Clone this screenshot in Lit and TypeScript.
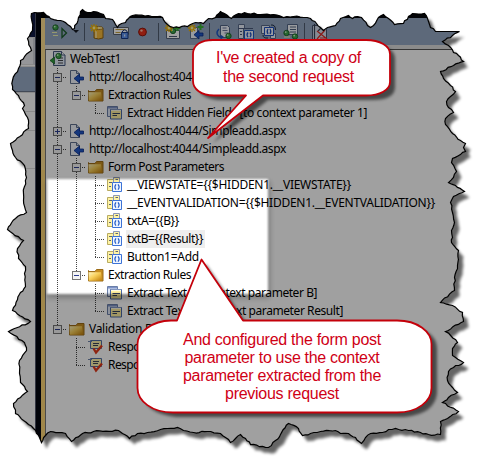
import { LitElement, html, css, svg } from "lit";
import { customElement } from "lit/decorators.js";

// Torn paper contour, clockwise from the top left corner.
const EDGE = `31,13 34,12 43,12 46,15 50,18 60,20 67,24 72,29 74,28 78,17 80,11 82,9 87,12 93,11 100,13 103,14 105,18 112,19 115,24 117,27 121,23 125,22 128,18 132,15 157,16 162,17 167,24 173,27 187,26 195,22 203,23 208,18 215,17 220,11 227,15 231,18 238,13 247,13 260,14 273,14 283,17 293,16 303,17 310,18 316,23 320,27 323,30 327,27 335,25 340,18 348,15 352,18 357,16 361,17 367,25 370,27 373,25 378,17 383,14 388,18 394,24 403,23 408,16 412,13 424,13 427,18 430,27 435,31 459,31 452,35 442,41 448,45 453,52 458,55 463,61 453,65 440,71 443,78 450,85 455,91 450,96 446,101 448,107 453,112 445,118 445,124 452,133 460,140 465,143 463,147 465,151 452,158 451,162 456,171 453,177 448,182 455,185 464,191 453,196 450,202 452,212 454,222 451,230 452,237 451,242 458,250 457,265 454,277 454,290 440,302 452,305 462,312 463,321 445,331 457,342 452,348 452,355 463,362 453,367 448,371 447,380 452,387 457,392 448,397 442,402 458,411 447,418 440,421 440,434 428,434 420,432 408,430 395,428 388,429 382,432 370,433 365,437 361,443 355,437 348,433 340,433 335,430 320,431 310,433 302,435 298,428 288,423 280,434 275,440 268,447 250,444 245,438 240,434 235,438 230,442 225,437 220,433 207,431 193,432 183,430 177,427 167,428 160,429 147,432 137,433 129,438 122,433 118,430 93,431 82,433 71,441 65,433 58,432 50,431 45,435 41,442 39,437 33,428 23,420 15,413 13,403 20,397 27,391 20,382 19,373 19,360 26,350 24,342 8,331 30,321 12,310 17,299 20,292 25,286 24,273 25,266 18,258 17,248 23,240 7,229 15,218 26,212 23,200 23,193 26,177 24,165 15,157 12,150 10,143 28,128 27,117 22,108 24,105 18,95 12,89 12,80 18,68 20,60 31,50 27,38 32,30`;

// Adds small deterministic notches between contour points.
function tear(edge: string): string {
  const p = edge.split(" ").map((s) => s.split(",").map(Number));
  const out: string[] = [];
  let seed = 7;
  p.forEach(([x, y], i) => {
    const [nx, ny] = p[(i + 1) % p.length];
    const d = Math.hypot(nx - x, ny - y);
    const n = d > 23.5 && (ny === y || nx === x) ? 1 : Math.max(1, Math.round(d / 3));
    for (let k = 0; k < n; k++) {
      seed = (seed * 16807) % 2147483647;
      const j = k ? ((seed % 100) / 100 - 0.5) * 1.7 : 0;
      const ux = (nx - x) / d, uy = (ny - y) / d;
      out.push(`${(x + ux * d * k / n - uy * j + 0.5).toFixed(1)} ${(y + uy * d * k / n + ux * j + 0.5).toFixed(1)}`);
    }
  });
  return "M" + out.join("L") + "Z";
}
const TORN = tear(EDGE);

interface Row { g: string[]; icon: string; text: string; w?: number; sel?: boolean }
// Guide cells: v line, t tee, l elbow, _ blank; a + or - adds an expander box.
const ROWS: Row[] = [
  { g: [], icon: "test", text: "WebTest1", w: 51 },
  { g: ["t-"], icon: "request", text: "http://localhost:4044/Simpleadd.aspx", w: 197 },
  { g: ["v", "l-"], icon: "folder", text: "Extraction Rules", w: 83 },
  { g: ["v", "_", "l"], icon: "extract", text: "Extract Hidden Fields [to context parameter 1]", w: 240 },
  { g: ["t+"], icon: "request", text: "http://localhost:4044/Simpleadd.aspx", w: 197 },
  { g: ["t-"], icon: "request", text: "http://localhost:4044/Simpleadd.aspx", w: 197 },
  { g: ["v", "t-"], icon: "folder", text: "Form Post Parameters", w: 116 },
  { g: ["v", "v", "t"], icon: "param", text: "__VIEWSTATE={{$HIDDEN1.__VIEWSTATE}}", w: 224 },
  { g: ["v", "v", "t"], icon: "param", text: "__EVENTVALIDATION={{$HIDDEN1.__EVENTVALIDATION}}", w: 308 },
  { g: ["v", "v", "t"], icon: "param", text: "txtA={{B}}", w: 52 },
  { g: ["v", "v", "t"], icon: "param", text: "txtB={{Result}}", w: 76, sel: true },
  { g: ["v", "v", "l"], icon: "param", text: "Button1=Add", w: 72 },
  { g: ["v", "l-"], icon: "folder", text: "Extraction Rules", w: 83 },
  { g: ["v", "_", "t"], icon: "extract", text: "Extract Text [to context parameter B]", w: 190 },
  { g: ["v", "_", "l"], icon: "extract", text: "Extract Text [to context parameter Result]", w: 216 },
  { g: ["l-"], icon: "folder", text: "Validation Rules", w: 85 },
  { g: ["_", "t"], icon: "validate", text: "Response URL", w: 74 },
  { g: ["_", "l"], icon: "validate", text: "Response Time", w: 78 },
];

const star = svg`<path d="M4 0v8M0 4h8M1 1l6 6M7 1l-6 6" stroke="#f0b400" stroke-width="1.3"/><circle cx="4" cy="4" r="1.4" fill="#fff3a0"/>`;
const globe = (x: number, y: number) => svg`<circle cx=${x} cy=${y} r="2.700" fill="#3fa34c" stroke="#145c22" stroke-width=".8"/><circle cx=${x - 0.8} cy=${y - 0.9} r=".9" fill="#c9f5c4"/>`;

const ICONS: Record<string, unknown> = {
  test: svg`<path d="M3.500.5h8l3.500 3.500v10.500H3.500z" fill="#e4edfb" stroke="#46597e"/><path d="M11.500.5V4H15" fill="#fff" stroke="#46597e"/><path d="M8 7h5M8 9.500h5M8 12h5" stroke="#45464a"/>${globe(8.5, 5)}<path d="M0 9.500 4.500 6v7z" fill="#2d9c3b" stroke="#145c22" stroke-width=".7"/>`,
  request: svg`<path d="M1.500 1.500h6l3 3v10h-9z" fill="#f2f5fc" stroke="#60708f"/><path d="M7.500 1.500v3h3" fill="#ccd8ee" stroke="#60708f"/><path d="M14.500 8h-4V5L5 9.500 10.500 14v-3h4z" fill="#2058c8" stroke="#0c2f8c" stroke-width=".8"/>`,
  folder: svg`<defs><linearGradient id="f" x2="1" y2="1"><stop stop-color="#fff8c8"/><stop offset=".45" stop-color="#f8cf5a"/><stop offset="1" stop-color="#bf7c08"/></linearGradient></defs><path d="M.5 3.500v10.500h14.500V2.500H8.500L7 4.500H1z" fill="#c88f22" stroke="#9c6c18"/><path d="M.5 5.200h12.500l1 8.600H.8z" fill="url(#f)"/>`,
  extract: svg`<path d="M.5 1.500h10v10h-10z" fill="#dfe8f8" stroke="#6a7fa8"/><path d="M1 2.700h9" stroke="#7e93c8" stroke-width="1.500"/><path d="M3.500 4.500h11v9.500H3.500z" fill="#fff0a0" stroke="#4a68a6"/><path d="M4 5.200h10" stroke="#fff"/><path d="M5.500 8.500H13M5.500 10.500H10" stroke="#34425e"/>`,
  param: svg`<path d="M.5 2.500h6v11h-6z" fill="#fff3a4" stroke="#b8ab60"/><path d="M6.500.5h6v5h-6z" fill="#fff3a4" stroke="#8b97b8"/><path d="M2 5.500h3M2 9.500h2M8.500 2.500h2.500" stroke="#5d6475"/><path d="M5.500 5.500h9v9h-9z" fill="#eff5ff" stroke="#3c73d6"/><path d="M9 7.300q-2.200 2.700 0 5.400M11 7.300q2.200 2.700 0 5.400" fill="none" stroke="#1f5ac8" stroke-width="1.200"/>`,
  validate: svg`<path d="M2.500 1.500h11v8h-11z" fill="#fff4ad" stroke="#5370a5"/><path d="M5 4.500h6M5 6.500h5" stroke="#3d465a"/><path d="M0 2.500h4" stroke="#6e83ab"/><path d="M5.500 9.500 8 13.500 14 6.500" fill="none" stroke="#e23a1c" stroke-width="2.300"/>`,
  play: svg`${globe(3.5, 3.5)}<path d="M0 8.500h5M1 11.500h5" stroke="#eef2b0"/><path d="M10 4.500v9l4.500-4.500z" fill="none" stroke="#195c2a" stroke-width="1.300"/>`,
  data: svg`<path d="M4 4v10q4.500 2 9 0V4z" fill="#f6b93a" stroke="#8f6310"/><path d="M6 5v9" stroke="#ffe9a0" stroke-width="1.500"/><ellipse cx="8.500" cy="4" rx="4.500" ry="1.600" fill="#ffe79a" stroke="#8f6310" stroke-width=".7"/>${star}`,
  lock: svg`<path d="M.5 3.500h15v7H.5z" fill="#fff" stroke="#57606f"/><path d="M2.500 5.500h10M2.500 8.500h5" stroke="#c6a341"/><path d="M9.500 9V7q2.300-2.500 4.500 0v2" fill="none" stroke="#1f3e80"/><path d="M8.500 8.500h6.500v6H8.500z" fill="#5f93ee" stroke="#173a86"/><path d="M11.700 10.500v2" stroke="#fff"/>`,
  record: svg`<circle cx="7.500" cy="8" r="3.900" fill="#e8301c" stroke="#91170c"/><circle cx="6.500" cy="6.600" r="1.200" fill="#ffb9a4"/>`,
  addcard: svg`<path d="M1.500 6.500h13v8h-13z" fill="#fff" stroke="#556178"/>${globe(8, 7)}<path d="M4 12.500h8" stroke="#4d5a72"/><path d="M12.500 1v6M9.500 4h6" stroke="#38b234" stroke-width="2"/>${star}`,
  addreq: svg`<path d="M2.500 3.500h7v11h-7z" fill="#f4f7ff" stroke="#60708f"/><path d="M15 9h-4V6.500L6 10.700 11 15v-3h4z" fill="#2058c8" stroke="#0c2f8c" stroke-width=".8"/><path d="M12.500 0v6M9.500 3h6" stroke="#38b234" stroke-width="2"/>${star}`,
  docs: svg`<path d="M4.500 1.500h7l2 2v10h-9z" fill="#f1f5fe" stroke="#526587"/><path d="M6.500 4h4M6.500 6.500h5M8.500 9h4" stroke="#68779b"/><path d="M3 5q-4 4 0 7.500l3 1" fill="none" stroke="#2158c4" stroke-width="1.500"/>${globe(12.5, 12)}<path d="M4.500 10.500 8 13l-3.500 2.500z" fill="#2158c4"/>`,
  form: svg`<path d="M.5.500h6v4h-6zM.5 4.500h5v10h-5z" fill="#e9f0fb" stroke="#59698a"/><path d="M0 4.500h15M2 7.500h2M2 10.500h2" stroke="#48587a"/><path d="M6.500 6.500h9v8.500h-9z" fill="#eaf2ff" stroke="#2158c4"/><path d="M10 8.500q-2 2.300 0 4.600M12 8.500q2 2.300 0 4.600" fill="none" stroke="#1d4fc0" stroke-width="1.200"/>`,
  swap: svg`<path d="M.5 1.500h8v8h-8zM9.500 9.500h5v5h-5z" fill="#eef4fe" stroke="#59698a"/><path d="M3.500 3.500h9v8h-9z" fill="#f6f9ff" stroke="#1d4fc0"/><path d="M7 5q-1.700 2.500 0 5M9 5q1.700 2.500 0 5" fill="none" stroke="#1d4fc0" stroke-width="1.200"/><path d="M10 1q4.500-.5 4.500 5M2 11q0 3.500 5 3" fill="none" stroke="#1d2c48"/>`,
  report: svg`<path d="M4.500.5h10v10h-10z" fill="#f4f7fc" stroke="#526587"/><path d="M7 3h6M7 5.500h6M7 8h6" stroke="#50617f"/>${globe(3.500, 9)}${globe(12, 12.500)}<path d="M1 13h6" stroke="#eef2b0"/>`,
  clear: svg`<path d="M.5 1.500h10l4 4v10H.5z" fill="#d5deed" stroke="#46536b"/><path d="M2.500 0v15M7 2l5 5M12 1 6 7" stroke="#3a4459" stroke-width="1.200"/><path d="M5 15 13 6M5 7l10 8M8 14h7" stroke="#d92f2a" stroke-width="1.200"/>`,
};

const icon = (name: string) => html`<svg class="ico" viewBox="0 0 16 16">${ICONS[name]}</svg>`;

@customElement("app-root")
export class AppRoot extends LitElement {
  static styles = css`
    :host { display: block; width: 487px; height: 467px; position: relative; overflow: hidden; background: #fff; }
    .layer { position: absolute; inset: 0; width: 487px; height: 467px; pointer-events: none; }
    .soft { filter: blur(1.5px); }
    .shot { position: relative; display: grid; grid-template-columns: 35px 6px 4px 1fr; height: 467px; background: #fff; font-family: "Noto Sans", "Open Sans", sans-serif; }
    .side { display: grid; grid-template-rows: 38px 27px 2px 25px 1px 19px 19px 38px 1fr; background: #fff; }
    .side > * { border-bottom: 1px solid #ddd; }
    .side .cap { background: #101b45; }
    .side .box { background: #eef0f4; border-right: 2px solid #d0d3da; }
    .side .sel { background: #98abc6; border-color: #69758a; }
    .bar { background: #03050f; border-left: 1px solid #52576a; }
    .gold { background: linear-gradient(#000 0 18px, #ffe090 18px 170px, #ffd877 170px); }
    .main { display: flex; flex-direction: column; }
    .top { height: 18px; background: #05070c; }
    .tools { height: 27px; background: #94a7c2; display: flex; align-items: center; padding-left: 7px; }
    .tools .ico { width: 16px; height: 16px; flex: none; }
    .drop { border: 3px solid transparent; border-top: 3px solid #151a24; margin: 3px 5px 0 5px; height: 0; }
    .sep { width: 1px; height: 18px; background: #515d70; flex: none; }
    .g1 { margin-left: 7px; } .g2 { margin-left: 6px; } .g3 { margin-left: 5px; }
    .strip { height: 4px; background: #dedede; }
    .tree { border-top: 1px solid #555; border-left: 1px solid #777; flex: 1; padding-left: 2px; }
    .row { display: flex; height: 18px; align-items: center; }
    .cell { width: 19px; height: 18px; flex: none; }
    .tree .ico { width: 16px; height: 16px; flex: none; margin: 0 4px 0 2px; }
    .label { font-size: 12px; line-height: 18px; color: #000; white-space: pre; margin-left: -1px; padding-left: 1px; }
    .sel-row { background: #eee; padding-right: 2px; }
    .spot { position: absolute; left: 47px; top: 179px; width: 221px; height: 115px; filter: blur(1.3px); box-shadow: 0 0 0 600px rgba(0, 0, 0, .373), 1px 3px 5px 1px rgba(0, 0, 0, .25); }
    .note { position: absolute; display: flex; flex-direction: column; align-items: center; color: #cf0016; font: 16px/18px "Liberation Sans", Arial, sans-serif; white-space: pre; }
    .one { left: 191px; top: 49px; width: 195px; line-height: 18.500px; }
    .two { left: 138px; top: 331px; width: 288px; }
  `;

  // Letter spacing brings each label to its designed width.
  firstUpdated() {
    this.renderRoot.querySelectorAll<HTMLElement>("[data-w]").forEach((el) => {
      const n = el.textContent!.length;
      const w = el.getBoundingClientRect().width;
      el.style.letterSpacing = `${(Number(el.dataset.w) - w) / n}px`;
    });
  }

  cell(kind: string) {
    const [k, box] = kind;
    return html`<svg class="cell" viewBox="0 0 19 18" shape-rendering="crispEdges">
      ${k !== "_" ? svg`<path d=${k === "l" ? "M9.5 0v10" : "M9.5 0v18"} stroke="#444" stroke-dasharray="1 1"/>` : ""}
      ${"tl".includes(k) ? svg`<path d="M9 9.500h11" stroke="#444" stroke-dasharray="1 1"/>` : ""}
      ${box ? svg`<rect x="5.500" y="5.500" width="8" height="8" fill="#f4f4f4" stroke="#757575"/><path d=${box === "+" ? "M7 9.500h5M9.500 7v5" : "M7 9.500h5"} stroke="#2c3d90"/>` : ""}
    </svg>`;
  }

  line(text: string, w: number) {
    return html`<span data-w=${w}>${text}</span>`;
  }

  render() {
    return html`
      <svg class="layer"><path class="soft" d=${TORN} fill="#000" opacity=".6" transform="translate(5 6)"/></svg>
      <div class="shot" style="clip-path: path('${TORN}')">
        <div class="side"><i class="cap"></i><i class="box"></i><i></i><i class="sel"></i><i></i><i></i><i></i><i></i></div>
        <div class="bar"></div>
        <div class="gold"></div>
        <div class="main">
          <div class="top"></div>
          <div class="tools">
            ${icon("play")}<i class="drop"></i><i class="sep"></i>
            <i class="g3"></i>${icon("data")}<i class="g1"></i>${icon("lock")}<i class="g2"></i>${icon("record")}
            <i class="g1"></i><i class="sep"></i><i class="g2"></i>${icon("addcard")}<i class="g1"></i>${icon("addreq")}
            <i class="g3"></i><i class="sep"></i><i class="g2"></i>${icon("docs")}<i class="g2"></i>${icon("form")}
            <i class="g1"></i>${icon("swap")}<i class="g2"></i>${icon("report")}<i class="g3"></i><i class="sep"></i>
            <i class="g1"></i>${icon("clear")}
          </div>
          <div class="strip"></div>
          <div class="tree">
            ${ROWS.map((r) => html`<div class="row">${r.g.map((g) => this.cell(g))}${icon(r.icon)}<span class="label ${r.sel ? "sel-row" : ""}"><span data-w=${r.w}>${r.text}</span></span></div>`)}
          </div>
        </div>
        <div class="spot"></div>
      </div>
      <svg class="layer">
        <path d=${TORN} fill="none" stroke="#000" stroke-width="1.200"/>
        <g class="soft" fill="#000" opacity=".55" transform="translate(5 5)">
          <path d="M213 40H367Q390 41 390 54V82Q390 95 367 95H263L208 138 246 95H213Q193 93 193 80V54Q193 41 213 40Z"/>
          <path d="M171 320.500H177L201 259 243 320.500H399Q432 324 432 344V388Q430 409 399 412H171Q139 408 138 388V344Q140 323 171 320.500Z"/>
        </g>
        <g fill="#fff" stroke="#c4000a" stroke-width="1.800" stroke-linejoin="round">
          <path d="M213 40H366C380 40 390 46 390 54V82C390 90 380 95.500 366 95.500H263L208 138 246 95.500H214C201 95.500 193 89 193 81V54C193 45 201 40 213 40Z"/>
          <path d="M171 320.500H177L201.500 259.500 243 320.500H397C418 320.500 431.500 332 431.500 344V388C431.500 401 418 412.500 397 412.500H173C152 412.500 137.500 401 137.500 388V344C137.500 332 152 321 171 320.500Z"/>
        </g>
      </svg>
      <div class="note one">${this.line("I've created a copy of", 145)}${this.line("the second request", 131)}</div>
      <div class="note two">${this.line("And configured the form post", 198)}${this.line("parameter to use the context", 195)}${this.line("parameter extracted from the", 198)}${this.line("previous request", 114)}</div>
    `;
  }
}
